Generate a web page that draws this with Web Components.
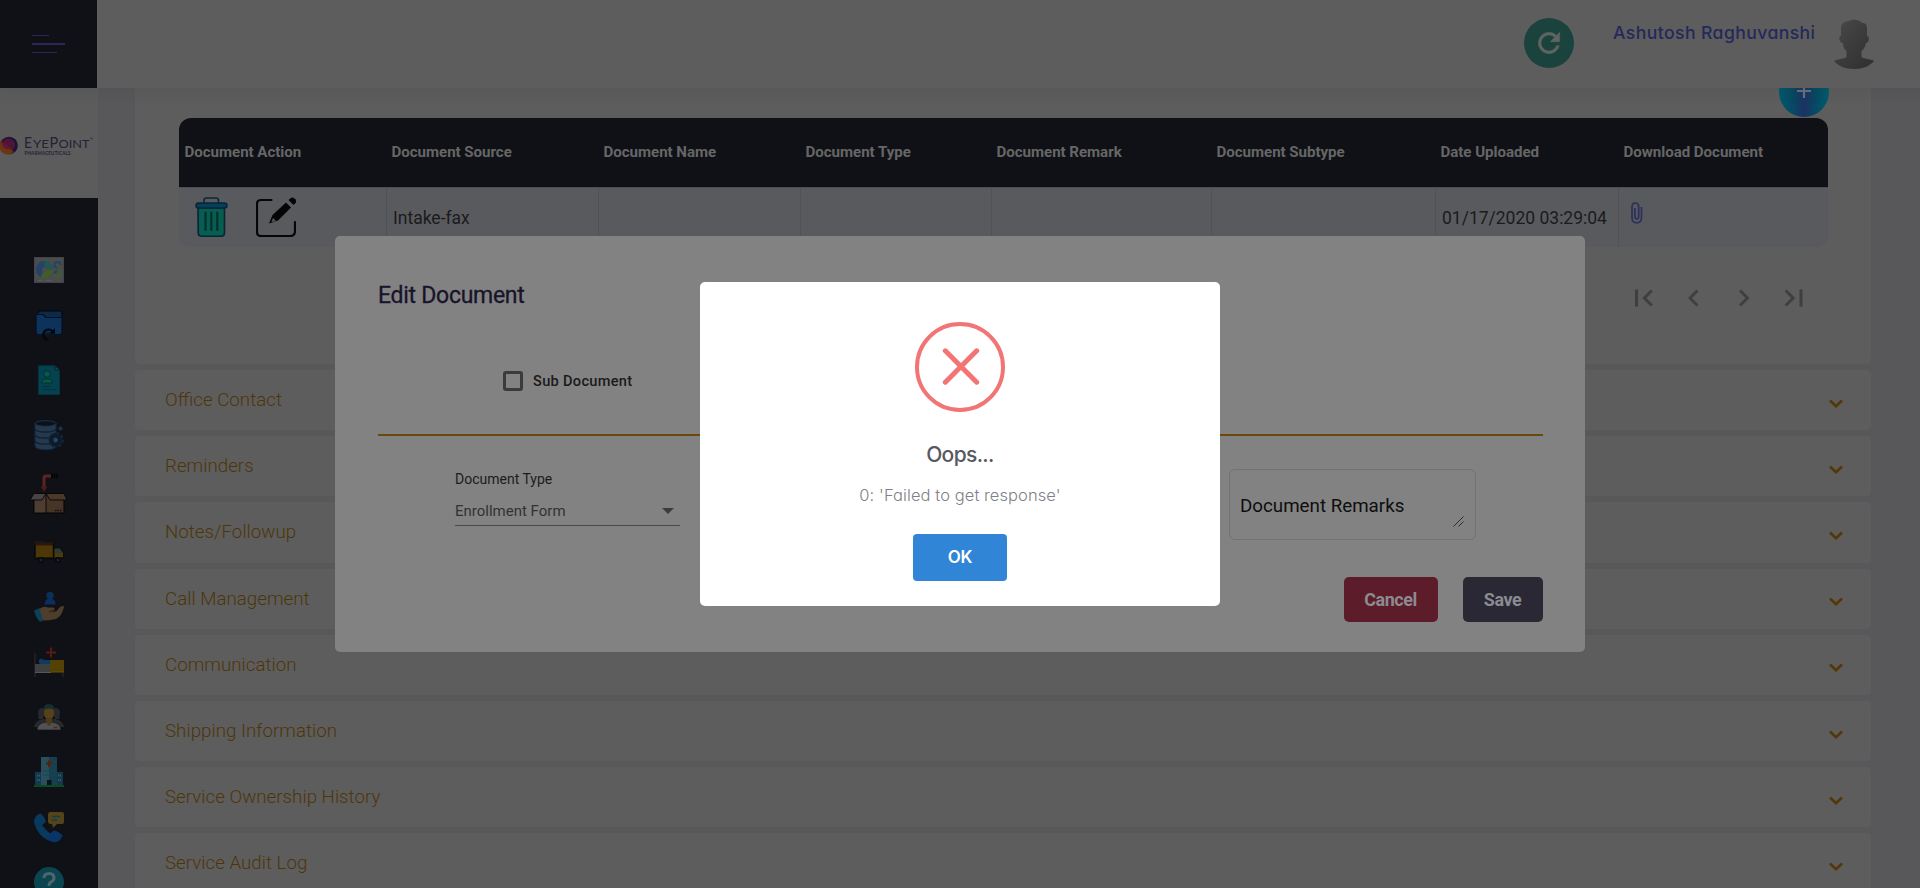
<!DOCTYPE html>
<html lang="en">
<head>
<meta charset="utf-8">
<title>Edit Document</title>
<style>
html,body{margin:0;height:100%;overflow:hidden}
body{background:#58585a;font-family:Roboto,"Liberation Sans",sans-serif;color:#1a1a1b}
</style>
</head>
<body>
<app-shell></app-shell>
<script>
const define = (name, html, setup) => {
  const t = document.createElement('template');
  t.innerHTML = html;
  customElements.define(name, class extends HTMLElement {
    constructor() {
      super();
      this.attachShadow({mode: 'open'}).appendChild(t.content.cloneNode(true));
    }
    connectedCallback() { if (setup) setup(this, this.shadowRoot); }
  });
};

/* ---------- header ---------- */
define('top-bar', `
<style>
:host{display:flex;height:88px;background:#5d5d5d;position:relative;z-index:2;box-shadow:0 1px 15px 1px rgba(40,40,50,.12)}
.menu{width:97px;background:#101116;display:flex;flex-direction:column;box-sizing:border-box;padding:35px 0 0 32px}
.menu i{display:block;background:#2d2759;height:1px}
.menu i:nth-child(1){width:17px}
.menu i:nth-child(2){width:33px;height:2px;margin:7px 0}
.menu i:nth-child(3){width:25px}
.right{margin-left:auto;display:flex;align-items:flex-start;padding-right:46px}
.refresh{width:50px;height:50px;margin-top:18px;border-radius:50%;background:#1a433e;display:flex;align-items:center;justify-content:center}
.name{margin:20px 19px 0 39px;font:500 17.6px/26px Inter,sans-serif;font-feature-settings:"cv11";color:#25285a;width:202px;white-space:nowrap;letter-spacing:.42px}
.avatar{margin-top:19px;width:40px;height:50px}
svg{display:block}
</style>
<div class="menu"><i></i><i></i><i></i></div>
<div class="right">
 <div class="refresh"><svg width="32" height="32" viewBox="0 0 24 24"><path fill="#5f6462" stroke="#5f6462" stroke-width=".4" d="M17.65 6.35A7.96 7.96 0 0 0 12 4a8 8 0 1 0 7.73 10h-2.08A6 6 0 1 1 12 6c1.66 0 3.14.69 4.22 1.78L13 11h7V4l-2.35 2.35z"/></svg></div>
 <div class="name">Ashutosh Raghuvanshi</div>
 <svg class="avatar" viewBox="0 0 40 50"><defs><linearGradient id="a" x1="0" y1="0" x2="1" y2="1"><stop offset="0" stop-color="#4a4a4a"/><stop offset=".5" stop-color="#3b3b3b"/><stop offset="1" stop-color="#2f2f2f"/></linearGradient></defs>
 <path fill="url(#a)" d="M15 2C18 0 25 0 28 4C32 4 33 6 33 10V17C36 17 35 24 32 24C31 28 30 30 27.500 32V38C30 40 37 40 40 42C36 47 29 50 20 50C11 50 4 47 0 42C3 40 10 40 12.500 38V32C10 30 9 28 9 24C5 24 4 17 7 17V9C7 5 10 2 15 2Z"/></svg>
</div>`);

/* ---------- sidebar ---------- */
const icons = [
`<rect x="0" y="2" width="30" height="26" fill="#424447"/><rect x="1" y="3" width="28" height="24" fill="#4a4c4e"/><circle cx="10.500" cy="14.500" r="5.500" fill="none" stroke="#24426a" stroke-width="6"/><path d="M10.500 9A5.500 5.500 0 0 1 16 14.500" fill="none" stroke="#1e5a4e" stroke-width="6"/><path d="M16 14.500A5.500 5.500 0 0 1 8 19.400" fill="none" stroke="#455b2a" stroke-width="6"/><circle cx="23.500" cy="10" r="3" fill="none" stroke="#24426a" stroke-width="2"/><circle cx="23.500" cy="19" r="3" fill="none" stroke="#455b2a" stroke-width="2"/><path d="M20.500 19a3 3 0 0 1 3-3" stroke="#24426a" stroke-width="2" fill="none"/><path d="M26.500 10a3 3 0 0 1-3 3" stroke="#455b2a" stroke-width="2" fill="none"/><path d="M4 25.500h5M12 25.500h6" stroke="#58595c"/>`,
`<path d="M2 5V23Q2 24.500 4 24.500H26Q28 24.500 28 22.500V3Q28 1 26 1H6Z" fill="#0b2949"/><path d="M2 4.500H9L12 7.500H28V22.500Q28 24.500 26 24.500H4Q2 24.500 2 22.500Z" fill="#0d335d" stroke="#05101d" stroke-width="1.200"/><path d="M4 3Q5 1 7 1H26Q28 1 28 3V7" fill="none" stroke="#04070c" stroke-width="1.200"/><rect x="9" y="22" width="12" height="4" fill="#0d1522" opacity=".7"/><path d="M14.500 29.500A5 5 0 1 1 19 22.500" fill="none" stroke="#04060a" stroke-width="2"/><path d="M15.500 23.500H21V18Z" fill="#04060a"/>`,
`<path d="M4.500 .7H21L25.500 5V29.500H4.500Z" fill="#04424f" stroke="#043240"/><path d="M21 .7V5H25.500Z" fill="#0a5a45" stroke="#03242d"/><circle cx="13" cy="9" r="3.300" fill="#085a45" stroke="#032f36"/><path d="M7.500 18C7.500 12.500 18.500 12.500 18.500 18Z" fill="#085a45" stroke="#032f36"/><path d="M8 21.500h8M8 24.500h15" stroke="#02303b" stroke-width="1.200"/>`,
`<path d="M1 3V26C1 31 22 31 22 26V3Z" fill="#26384b" stroke="#0d2b45"/><ellipse cx="11.500" cy="3.500" rx="10.500" ry="2.800" fill="#0c1119" stroke="#183551"/><path d="M1 9C3 13 20 13 22 9M1 15C3 19 18 19 20 15.500M1 21C3 25 16 25 18 22" stroke="#0d2237" fill="none" stroke-width="1.400"/><circle cx="22" cy="20" r="5" fill="none" stroke="#0d1b2a" stroke-width="4.500"/><circle cx="22" cy="20" r="7" fill="none" stroke="#122a41" stroke-width="1.600" stroke-dasharray="2.800 2.700"/><circle cx="22" cy="20" r="2" fill="#274a6a"/><circle cx="26.500" cy="8.500" r="2" fill="#17344f"/>`,
`<g transform="translate(-4 -5)"><path d="M14 16V4.500Q14 3 16 3H21" stroke="#5a2620" stroke-width="3" fill="none"/><path d="M10.500 13.500H17.500L14 19Z" fill="#4a1b18"/><path d="M22 .500V5M24.500 .500V5M27 .500V5" stroke="#040507" stroke-width="1.700"/><rect x="4" y="21" width="30" height="19" fill="#463527" stroke="#08080a" stroke-width="1.200"/><path d="M4 21H16V40H4Z" fill="#4e3e31" stroke="#08080a"/><path d="M4 20.500L0 27H12L16 20.500Z" fill="#484443" stroke="#08080a"/><path d="M16 20.500L20 27H37L34 20.500Z" fill="#4a3829" stroke="#08080a"/><path d="M25 37.500h7" stroke="#100c09" stroke-width="1.400" stroke-dasharray="1.500 1"/></g>`,
`<rect x="1" y="7" width="18.500" height="14.500" fill="#4d3709" stroke="#090806" stroke-width="1.500"/><path d="M1 7H19" stroke="#2b1809" stroke-width="3"/><path d="M20 11H26L29.500 16V21.500H20Z" fill="#4e390b" stroke="#0b0b0a"/><path d="M21.500 12H25.500L28 16H21.500Z" fill="#1c3e42"/><path d="M1 20.500H29" stroke="#221907"/><circle cx="7" cy="23" r="2.300" fill="#0c2a33" stroke="#06090d" stroke-width="1.500"/><circle cx="24" cy="23" r="2.300" fill="#0c2a33" stroke="#06090d" stroke-width="1.500"/><path d="M0 5H10" stroke="#1c1c22"/>`,
`<circle cx="16" cy="3.500" r="3.700" fill="#0c3157"/><path d="M10.500 12.500Q10.500 6.500 16 6.500Q21.500 6.500 21.500 12.500Z" fill="#0c2d64"/><path d="M0 18.500L6 16L10 28L6 30Q2 26 0 18.500Z" fill="#0b4256"/><path d="M5.500 17Q10 13.500 14 15.500H19Q21.500 16 20 18.500H16L22 19.500L26 15Q30 13 30 15Q28 24 22 27Q15 28.500 9 28.500Z" fill="#4e3d2b"/><path d="M15 19.500H21" stroke="#33261a" stroke-width="1.200"/>`,
`<path d="M17 .500V10.500M12 5.500H22" stroke="#571c0c" stroke-width="2"/><path d="M1 6V30M29 23V30" stroke="#2a2c2e"/><rect x="1" y="17" width="16" height="9" fill="#3d3f40"/><circle cx="7.500" cy="14.500" r="2.700" fill="#103c61"/><path d="M10 13H19V17H9Z" fill="#113b5e"/><rect x="16" y="13" width="14" height="12" fill="#544205"/><path d="M1 25.500H17" stroke="#555759"/><path d="M17 25H30" stroke="#685007"/>`,
`<circle cx="8.500" cy="10.500" r="4.500" fill="#28292d"/><circle cx="21.500" cy="10.500" r="4.500" fill="#28292d"/><path d="M4.500 9V17H9V9ZM21 9V17H25.500V9Z" fill="#28292d"/><path d="M0 25Q1 18.500 9 17H21Q29 18.500 30 25Z" fill="#28292d"/><path d="M3 28Q3 21.500 12 20H18Q27 21.500 27 28Z" fill="#505153" stroke="#14151a" stroke-width=".7"/><ellipse cx="15" cy="10.500" rx="5" ry="7.500" fill="#564219"/><path d="M10 8Q9 2 15 2Q21 2 20 8Q15 5 10 8Z" fill="#182c34"/><path d="M12 16H18V21L15 24L12 21Z" fill="#4c3915"/><path d="M19.500 25.500h4" stroke="#5a251d" stroke-width="1.600"/>`,
`<rect x="1" y="15" width="28" height="14" fill="#12394d"/><rect x="7" y="0" width="8" height="29" fill="#294e5c"/><rect x="15" y="0" width="8" height="29" fill="#17404f"/><path d="M15 3.500V10M12 6.500H18" stroke="#5b1d0c" stroke-width="2"/><path d="M3 18.500H6M24 18.500H27M3 23H6M24 23H27" stroke="#2e5c69" stroke-width="2" stroke-dasharray="1.300 .600"/><path d="M9 14H21M9 18H21" stroke="#1a4352" stroke-width="1.200"/><rect x="13" y="23" width="4.500" height="6" fill="#061418"/><path d="M0 29H30" stroke="#0c4a20" stroke-width="2"/>`,
`<path d="M6 1.500Q10 3 12 10L8 13Q12 19 17 22L20 18.500Q26 20 28.500 24Q25 31 19 30Q4 26 0 10Q0 4 6 1.500Z" fill="#083a5d"/><path d="M16 21.500L20 18.500Q26 20 28.500 24Q25 31 19 30L11 26Z" fill="#093468"/><path d="M16 0H28Q30 0 30 2V10Q30 12 28 12H23L19 16L18 12H16Q14 11.500 14 9.500V2.500Q14 0 16 0Z" fill="#544417"/><path d="M18 4.500H26M18 8H23" stroke="#123c53" stroke-width="1.500"/>`,
`<circle cx="15" cy="15" r="15" fill="#0b4650"/><path d="M10 11Q10 6.500 15 6.500Q20 6.500 20 11Q20 13.500 17 15Q15 16 15 19" fill="none" stroke="#52656a" stroke-width="3"/><circle cx="15" cy="23.500" r="2" fill="#52656a"/>`];
define('nav-icon', `
<style>:host{display:flex;height:55px;flex:none;align-items:center;justify-content:center}
:host([n="4"]){height:62px}
svg{width:30px;height:30px;overflow:visible;display:block}</style>
<svg viewBox="0 0 30 30"></svg>`, (el, r) => { r.querySelector('svg').innerHTML = icons[+el.getAttribute('n')]; });

define('side-bar', `
<style>
:host{display:block;width:98px;background:#101116;height:800px;overflow:hidden;flex:none}
.logo{height:110px;background:#5c5c5c;margin-bottom:44px}
svg{display:block}
</style>
<div class="logo"><svg width="98" height="110" viewBox="0 0 98 110">
<circle cx="9" cy="57.500" r="8.800" fill="#1c1434"/><circle cx="8.500" cy="57" r="6.500" fill="#511437"/><path d="M0 52L14 64Q10 67.500 5 66Q0 64 0 60Z" fill="#6d3412"/><path d="M1 53L10 61Q6 62 3 59Z" fill="#5a1a3f"/>
<g font-family="Lato" fill="#272036"><text x="24" y="60" font-size="14.500" textLength="8" lengthAdjust="spacingAndGlyphs">E</text><text x="33" y="60" font-size="11.500" textLength="16" lengthAdjust="spacingAndGlyphs">YE</text><text x="49.500" y="60" font-size="14.500">P</text><text x="58.500" y="60" font-size="11.500" textLength="31" lengthAdjust="spacingAndGlyphs">OINT</text>
<text x="24.500" y="67" font-size="4.600" font-weight="700" textLength="46">PHARMACEUTICALS</text></g><circle cx="91.500" cy="50.500" r="1" fill="#6b1d3c"/></svg></div>
<div class="nav"></div>`, (el, r) => {
  r.querySelector('.nav').innerHTML = icons.map((_, i) => `<nav-icon n="${i}"></nav-icon>`).join('');
});

/* ---------- documents table ---------- */
define('doc-table', `
<style>
:host{display:block;border-radius:12px;overflow:hidden}
.g{display:grid;grid-template-columns:208px 212px 202px 191px 220px 224px 183px 1fr}
.h{height:70px;background:#101116;color:#666667;font-weight:700;font-size:15.100px;letter-spacing:-.04px;align-items:center;border-bottom:1px solid #4c4d52;box-sizing:border-box;padding-bottom:2px}
.h span{padding-left:4.500px;white-space:nowrap}
.h span:first-child{padding-left:5.500px}
.r{height:59px;background:#595a5e;font-size:17.500px;line-height:60px}
.r>div{box-sizing:border-box;border-right:1px solid #515257;padding-left:6px;display:flex;white-space:nowrap;font-weight:400;color:#1b1b1d}
.r>div:last-child{border:0}
.r .act{padding:9px 0 0 16px;gap:28px}
svg{display:block;flex:none}
.clip{margin:14px 0 0 5px}
</style>
<div class="g h"><span>Document Action</span><span>Document Source</span><span>Document Name</span><span>Document Type</span><span>Document Remark</span><span>Document Subtype</span><span>Date Uploaded</span><span>Download Document</span></div>
<div class="g r"><div class="act">
<svg width="33" height="40" viewBox="0 0 33 40"><path d="M9 6V3Q9 1 11.500 1H21Q23.500 1 23.500 3V6" fill="none" stroke="#0d2639" stroke-width="1.600"/><path d="M3 11H29.500V36Q29.500 39.200 26 39.200H7Q3.200 39.200 3.200 36Z" fill="#075d50" stroke="#082436" stroke-width="1.600"/><rect x="1" y="6" width="31" height="5" rx="2.500" fill="#05405b" stroke="#08253a" stroke-width="1.500"/><path d="M10.500 15.500V33M16.300 15.500V33M22.300 15.500V33" stroke="#06302e" stroke-width="2.200" stroke-linecap="round"/></svg>
<svg width="40" height="40" viewBox="0 0 40 40"><path d="M15.500 3H5Q1 3 1 7V35Q1 39 5 39H34Q39 39 39 34V25" fill="none" stroke="#060607" stroke-width="2.200" stroke-linecap="round"/><path d="M13 26.500L16.500 18L30 5.500L35 10.500L22 23.500Z" fill="#040405"/><path d="M32.500 3L35.500 .400Q41 1 40 5.500L37.500 8Z" fill="#040405"/><path d="M17 21L20 24L15.500 25Z" fill="#595a5e"/></svg></div>
<div>Intake-fax</div><div></div><div></div><div></div><div></div><div>01/17/2020 03:29:04</div><div><svg class="clip" width="14" height="22" viewBox="0 0 14 22"><path d="M11.500 5V15.500Q11.500 20.800 6.700 20.800Q2 20.800 2 15.500V5Q2 1 5.300 1Q8.700 1 8.700 5V14.500Q8.700 16.800 6.700 16.800Q4.900 16.800 4.900 14.500V6" fill="none" stroke="#2c2f5c" stroke-width="1.700"/></svg></div></div>`);

define('doc-panel', `
<style>
:host{display:block;background:#5d5d5d;height:276px;border-radius:0 0 5px 5px;padding:30px 43px 0 44px;box-sizing:border-box;position:relative}
.add{position:absolute;right:42px;top:-21px;width:50px;height:50px;border-radius:50%;background:linear-gradient(90deg,#015a6c,#064b63 25%,#1c3263 50%,#064b63 75%,#015d6e)}
.add svg{position:absolute;left:18px;top:17px}
.pg{display:flex;justify-content:flex-end;gap:26px;margin:39px 22px 0 0}
svg{display:block}
.pg svg{width:24px;height:24px;fill:#3f3f3f;overflow:visible}
</style>
<doc-table></doc-table>
<div class="add"><svg width="14" height="14" viewBox="0 0 14 14"><path d="M7 0V14M0 7H14" stroke="#66717a" stroke-width="2.200"/></svg></div>
<div class="pg">
<svg viewBox="0 0 24 24"><path d="M3 3.500h3v17H3zM18.800 3.500L20.800 5.500L14.300 12L20.800 18.500L18.800 20.500L10.300 12Z"/></svg>
<svg viewBox="0 0 24 24"><path d="M14.500 3.500L16.500 5.500L10 12L16.500 18.500L14.500 20.500L6 12Z"/></svg>
<svg viewBox="0 0 24 24"><path d="M9 3.500L7 5.500L13.500 12L7 18.500L9 20.500L17.500 12Z"/></svg>
<svg viewBox="0 0 24 24"><path d="M17.500 3.500h3v17h-3zM4.700 3.500L2.700 5.500L9.200 12L2.700 18.500L4.700 20.500L13.200 12Z"/></svg>
</div>`);

/* ---------- accordion ---------- */
define('fold-row', `
<style>
:host{display:flex;box-sizing:border-box;height:60.200px;margin-top:6px;background:#5d5d5d;border-radius:4px;align-items:center;justify-content:space-between;padding:0 28px 0 30px;color:#4e3509;font-weight:300;font-size:18.750px;flex:none}
svg{display:block;margin-top:7px}
</style>
<slot></slot><svg width="14" height="10" viewBox="0 0 14 10"><path d="M1 1.500L7 7.300L13 1.500" fill="none" stroke="#533708" stroke-width="2.600"/></svg>`);

/* ---------- edit dialog ---------- */
define('edit-dialog', `
<style>
:host{display:flex;position:fixed;inset:0;align-items:center;justify-content:center;z-index:5}
.box{width:1250px;height:416px;box-sizing:border-box;background:#828282;border-radius:5px;padding:45px 42px 30px 43px;display:flex;flex-direction:column}
h2{margin:0;font-weight:400;font-size:23px;line-height:30px;color:#17142b;-webkit-text-stroke:.3px #17142b;letter-spacing:-.28px}
.chk{display:flex;align-items:center;gap:10px;margin:60px 0 0 125px;height:20px;font-size:14.600px;font-weight:500;letter-spacing:.3px;color:#1a1a1b}
.chk i{width:20px;height:20px;box-sizing:border-box;border:3px solid #3b3b3b;border-radius:3px}
hr{height:2px;border:0;background:#6c490a;margin:43px 0 0;flex:none}
.f{display:flex;justify-content:space-between;padding:33px 67px 0 77px}
.sel{width:225px}
.sel label{display:block;font-size:14px;line-height:20px;color:#1c1c1c}
.val{display:flex;justify-content:space-between;align-items:center;padding-right:6px;margin-top:7px;height:29px;border-bottom:1px solid #4b4b4b;font-size:15px;color:#323232;line-height:26px}
.val i{border:6px solid transparent;border-top-color:#3c3c3c;border-bottom:0}
.ta{width:247px;height:71px;box-sizing:border-box;border:1px solid #727274;border-radius:6px;padding:23px 0 0 10px;font-size:18.750px;line-height:26px;color:#0e0e0e;position:relative}
.ta svg{position:absolute;right:11px;bottom:12px}
.b{display:flex;justify-content:flex-end;gap:25px;margin-top:37px}
.b span{height:45px;line-height:46px;border-radius:5px;text-align:center;font-weight:700;font-size:17.900px;letter-spacing:-.4px;color:#8b8b90;box-sizing:border-box;padding-right:1px}
.c{width:94px;background:#5d1c2a}.s{width:80px;background:#292834}
</style>
<div class="box"><h2>Edit Document</h2>
<div class="chk"><i></i>Sub Document</div><hr>
<div class="f"><div class="sel"><label>Document Type</label><div class="val">Enrollment Form<i></i></div></div>
<div class="ta">Document Remarks<svg width="11" height="11" viewBox="0 0 11 11"><path d="M.5 10.500L10.500 .500M5.500 10.500L10.500 5.500" stroke="#2d2d2d" stroke-width="1"/></svg></div></div>
<div class="b"><span class="c">Cancel</span><span class="s">Save</span></div></div>`);

/* ---------- alert ---------- */
define('error-alert', `
<style>
:host{display:flex;position:fixed;inset:0;align-items:center;justify-content:center;z-index:6;font-family:Inter,sans-serif;font-feature-settings:"cv11"}
.box{width:520px;height:324px;box-sizing:border-box;background:#fff;border-radius:5px;padding-top:40px;display:flex;flex-direction:column;align-items:center}
svg{display:block}
h3{margin:28px 0 0;font-weight:500;font-size:21px;line-height:30px;color:#575962;letter-spacing:-.65px}
p{margin:13px 0 0;font-weight:300;font-size:16.500px;line-height:24px;color:#7e7f89;letter-spacing:.08px}
.ok{margin-top:27px;width:94px;height:47px;border-radius:4px;background:#3085d6;color:#fff;font-weight:600;font-size:17px;letter-spacing:-.3px;line-height:47px;text-align:center}
</style>
<div class="box"><svg width="90" height="90" viewBox="0 0 90 90"><circle cx="45" cy="45" r="43" fill="none" stroke="#f27474" stroke-width="4"/><path d="M30.300 28.800L61.700 60.200M61.700 28.800L30.300 60.200" stroke="#f27474" stroke-width="5" stroke-linecap="round"/></svg>
<h3>Oops...</h3><p>0: 'Failed to get response'</p><div class="ok">OK</div></div>`);

define('app-shell', `
<style>
:host{display:block;height:888px;overflow:hidden}
.m{display:flex;height:800px}
main{flex:1;padding:0 49px 0 37px;overflow:hidden}
</style>
<top-bar></top-bar>
<div class="m"><side-bar></side-bar><main><doc-panel></doc-panel>
<fold-row>Office Contact</fold-row><fold-row>Reminders</fold-row><fold-row>Notes/Followup</fold-row><fold-row>Call Management</fold-row><fold-row>Communication</fold-row><fold-row>Shipping Information</fold-row><fold-row>Service Ownership History</fold-row><fold-row>Service Audit Log</fold-row></main></div>
<edit-dialog></edit-dialog><error-alert></error-alert>`);
</script>
</body>
</html>
